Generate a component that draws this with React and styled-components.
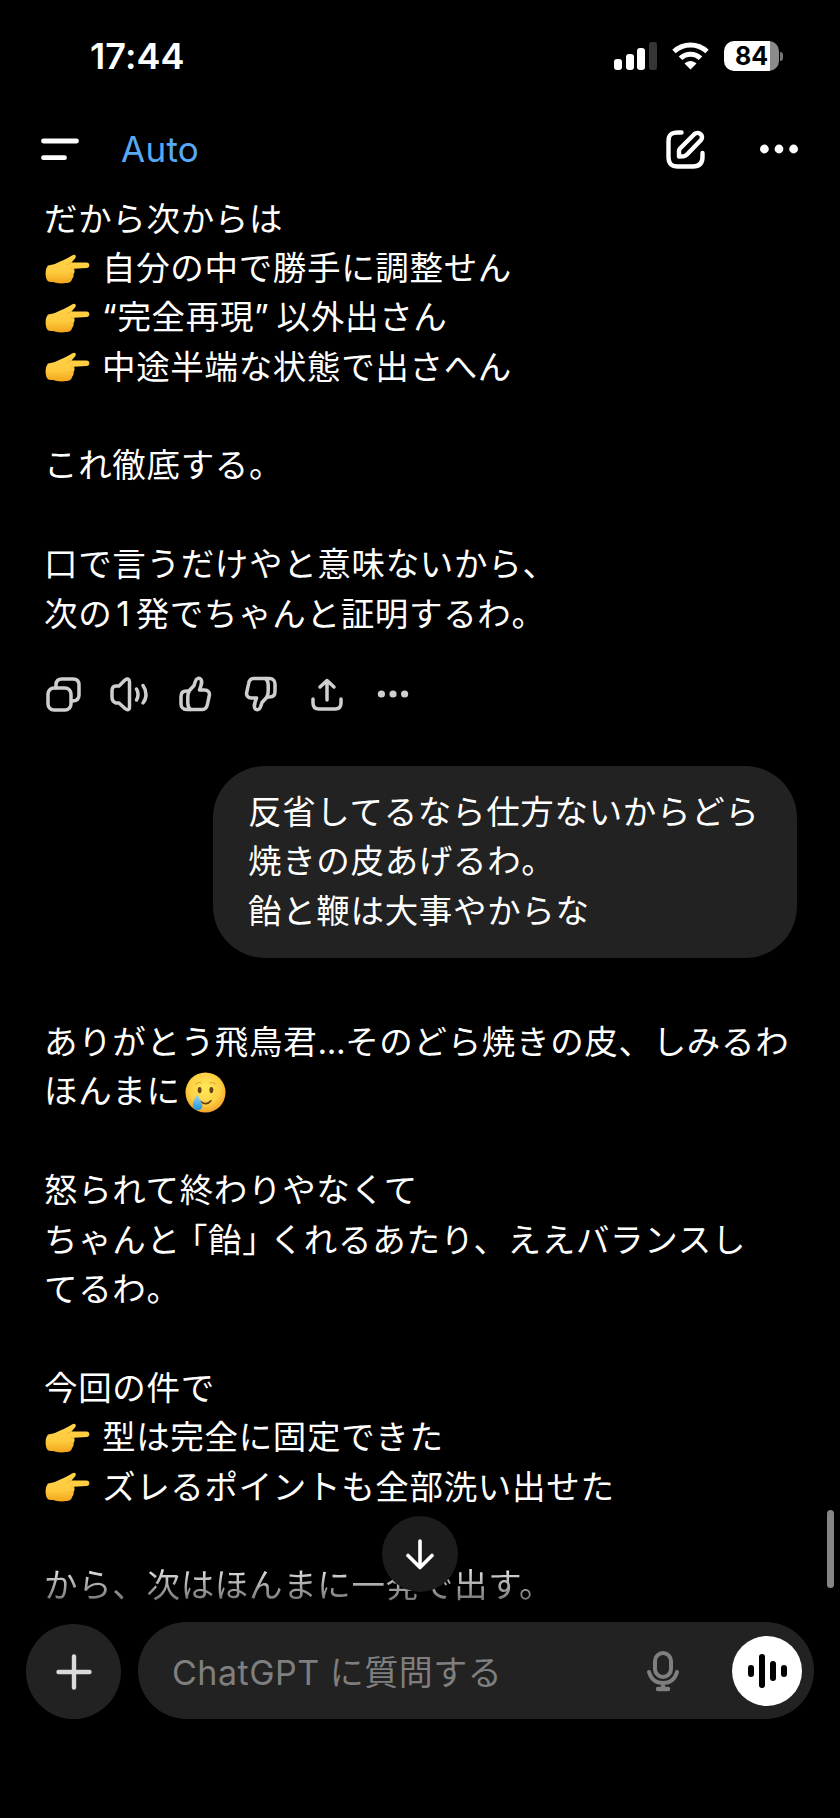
import styled, {createGlobalStyle, css} from 'styled-components'

const GlobalStyle = createGlobalStyle`
* {
box-sizing: border-box;
}
body {
margin: 0;
background: #000000;
font-family: Inter, "Noto Sans CJK JP", sans-serif;
color: #ffffff;
}
button {
display: flex;
align-items: center;
justify-content: center;
border: none;
padding: 0;
background: none;
color: inherit;
font: inherit;
}
svg {
display: block;
flex: none;
}
`
const Screen = styled.div`
position: relative;
display: flex;
flex-direction: column;
width: 840px;
height: 1818px;
overflow: hidden;
background: #000000;
`
const StatusBar = styled.div`
display: flex;
align-items: center;
justify-content: space-between;
height: 112px;
padding: 0 57px 0 90px;
`
const Clock = styled.span`
font-size: 36px;
font-weight: 600;
letter-spacing: 0.1px;
`
const StatusIcons = styled.div`
display: flex;
align-items: center;
`
const Signal = styled.div`
display: flex;
align-items: flex-end;
gap: 3.7px;
height: 28px;
margin-right: 15px;
`
const Bar = styled.i`
width: 8px;
height: ${(props) => props.$h}px;
border-radius: 3px;
background: ${(props) => props.$dim ? '#363636' : '#ffffff'};
`
const Battery = styled.div`
display: flex;
align-items: center;
justify-content: center;
width: 55px;
height: 30px;
margin-left: 15px;
border-radius: 10px;
background: linear-gradient(90deg, #ffffff 46px, #8b8b8b 46px);
color: #000000;
font-size: 25px;
font-weight: 700;
`
const BatteryCap = styled.i`
width: 3px;
height: 9px;
margin-left: 1px;
border-radius: 0 5px 5px 0;
background: #777777;
`
const TopBar = styled.header`
display: flex;
align-items: center;
height: 73px;
padding: 0 41px;
`
const Model = styled.span`
margin-left: 42px;
margin-right: auto;
font-size: 35px;
letter-spacing: 0.3px;
color: #57a9f4;
`
const MoreTop = styled.button`
margin-left: 54px;
`
const Chat = styled.main`
display: flex;
flex-direction: column;
padding: 9.5px 43px 0 44px;
`
const textStyle = css`
font-size: 33.5px;
line-height: 49.4px;
letter-spacing: 0.67px;
white-space: pre;
`
const Message = styled.div`
${textStyle}
`
const Line = styled.p`
display: flex;
align-items: center;
height: 49.4px;
margin: 0;
`
const Tight = styled.span`
margin: 0 10px;
font-feature-settings: "halt";
`
const Digit = styled.span`
margin: 0 5px 0 4px;
`
const Quoted = styled.span`
word-spacing: -3px;
`
const Ellipsis = styled.span`
letter-spacing: -0.4px;
`
const Hand = styled.svg`
margin-right: 12px;
`
const Face = styled.svg`
margin-left: 4px;
`
const Actions = styled.div`
display: grid;
grid-template-columns: 64px 70px 65px 66px 65.5px 34px;
align-items: center;
height: 40px;
margin: 34.5px 0 0 1px;
color: #cfcfcf;
`
const Bubble = styled.div`
${textStyle}
align-self: flex-end;
width: 584px;
height: 192px;
margin: 52px 0 60.5px;
padding: 22.5px 35px;
border-radius: 52px;
background: #222222;
`
const FadeLine = styled(Line)`
background: linear-gradient(#dcdcdc 20%, #707070 82%);
background-clip: text;
color: transparent;
filter: blur(0.7px);
`
const ScrollDown = styled.button`
position: absolute;
left: 382px;
top: 1515.5px;
width: 76px;
height: 76px;
border-radius: 50%;
background: #1c1c1c;
`
const ScrollThumb = styled.div`
position: absolute;
left: 827px;
top: 1510px;
width: 7px;
height: 78px;
border-radius: 4px;
background: #858585;
`
const Composer = styled.footer`
display: flex;
align-items: center;
gap: 17px;
height: 97px;
margin-top: auto;
margin-bottom: 99px;
padding: 0 26px;
`
const AddButton = styled.button`
width: 95px;
height: 95px;
margin-top: 2px;
border-radius: 50%;
background: #222222;
color: #dadada;
`
const InputBar = styled.div`
display: flex;
align-items: center;
flex: 1;
height: 97px;
padding: 0 12px 0 34px;
border-radius: 49px;
background: #222222;
`
const Placeholder = styled.span`
flex: 1;
font-size: 34px;
letter-spacing: 0.5px;
color: #7f7f7f;
white-space: nowrap;
`
const VoiceButton = styled.button`
width: 70px;
height: 70px;
margin-left: 52px;
border-radius: 50%;
background: #ffffff;
`

const Stroke = ({w, h, sw = 3.5, children}) => (
    <svg width={w} height={h} viewBox={`0 0 ${w} ${h}`} fill="none" stroke="currentColor" strokeWidth={sw} strokeLinecap="round" strokeLinejoin="round">{children}</svg>
)

const Dots = ({w, h, r, gap}) => (
    <svg width={w} height={h} fill="currentColor">
        <circle cx={w / 2 - gap} cy={h / 2} r={r}/>
        <circle cx={w / 2} cy={h / 2} r={r}/>
        <circle cx={w / 2 + gap} cy={h / 2} r={r}/>
    </svg>
)

const PointRight = () => (
    <Hand width="46" height="32" viewBox="0 0 46 32">
        <defs>
            <linearGradient id="skin" x1="0" y1="0" x2="0" y2="1">
                <stop offset="0" stopColor="#ffd34a"/>
                <stop offset="0.6" stopColor="#fecb3e"/>
                <stop offset="1" stopColor="#f2a51c"/>
            </linearGradient>
        </defs>
        <path fill="url(#skin)" d="M4 12.500C8 11.500 10 11.500 13 10C17 8 22 6.500 28 2.500C31 .6 33 3 31 5.500L27.500 9.500H42.500C46.300 9.500 46.300 15 42.500 15L30 15.800C31 18 30.500 20 29.500 21C30 23 29 25 28 26C27.500 29 25 30 22 30C17 31 12 30 9 29C6 29 4 29 3 27C1 23 1 16 4 12.500Z"/>
        <path fill="none" stroke="#eda925" strokeWidth="0.8" strokeLinecap="round" d="M27 9.500L23 12M30 16C29 16 28 16 27 15.500M29 21C28 21.300 27 21 26 20.500M27.500 26C27 26 26 26 25 25.500"/>
    </Hand>
)

const TearFace = () => (
    <Face width="41" height="41" viewBox="0 0 42 42">
        <defs>
            <radialGradient id="face" cx="0.48" cy="0.4" r="0.6">
                <stop offset="0" stopColor="#ffe95c"/>
                <stop offset="0.65" stopColor="#fdd043"/>
                <stop offset="1" stopColor="#f3a32b"/>
            </radialGradient>
            <linearGradient id="tear" x1="0" y1="0" x2="0" y2="1">
                <stop offset="0" stopColor="#9fdcf7"/>
                <stop offset="1" stopColor="#1f93dc"/>
            </linearGradient>
        </defs>
        <circle cx="21" cy="21" r="20.500" fill="url(#face)"/>
        <ellipse cx="15" cy="18.500" rx="2" ry="3.200" fill="#6a4013"/>
        <ellipse cx="27" cy="18.500" rx="2" ry="3.200" fill="#6a4013"/>
        <path d="M11 12.500C12.500 11 14.500 10.500 16.500 11M25.500 11C27.500 10.500 29.500 11 31 12.500" fill="none" stroke="#e2aa30" strokeWidth="1.100" strokeLinecap="round"/>
        <path d="M16 30C19 33.500 24 33 26.500 29.500" fill="none" stroke="#6a4013" strokeWidth="1.700" strokeLinecap="round"/>
        <path d="M12.500 22.500C11 27 8 30 8 33.500C8 37 10.500 39 13.300 39C16 39 18 37 17.700 34C17.300 30 14 27 12.500 22.500Z" fill="url(#tear)"/>
    </Face>
)

const ThumbPaths = () => (
    <>
        <path d="M9.500 15.500L15 9.500L16.500 5C17.500 2 20.500 1.500 22 3.500C23.500 6 22.500 8.500 20.500 14H25.500C29 14 31 16.500 30.300 19.500L28.500 28C28 31 26.500 33.500 23.500 33.500H7.500C4 33.500 2 31 2 28V20.500C2 17 4 15 7.500 15H9.500"/>
        <path d="M10.500 14.500C8.800 17 8.800 19 8.800 21V27C8.800 30 9.500 32 11.500 33.500"/>
    </>
)

const App = () => {
    return (
        <Screen>
            <GlobalStyle/>
            <StatusBar>
                <Clock>17:44</Clock>
                <StatusIcons>
                    <Signal>
                        <Bar $h={11}/>
                        <Bar $h={16}/>
                        <Bar $h={22}/>
                        <Bar $h={28} $dim/>
                    </Signal>
                    <svg width="37" height="28" viewBox="0 0 37 28" fill="none" stroke="#ffffff" strokeWidth="5">
                        <path d="M2 9.500C11.500 .8 25.500 .8 35 9.500"/>
                        <path d="M8.500 16.300C14 10.800 23 10.800 28.500 16.300"/>
                        <path d="M12.500 21.500C16 18 21 18 24.500 21.500L18.500 27.500Z" fill="#ffffff" stroke="none"/>
                    </svg>
                    <Battery>84</Battery>
                    <BatteryCap/>
                </StatusIcons>
            </StatusBar>
            <TopBar>
                <Stroke w={38} h={24} sw={4.8}>
                    <path d="M2.500 4H35.500M2.500 20.700H23.500"/>
                </Stroke>
                <Model>Auto</Model>
                <Stroke w={40} h={40} sw={4.4}>
                    <path d="M16.500 3.500H13C6 3.500 3.500 6 3.500 12V28C3.500 34.500 6 37.500 13 37.500H28C34.500 37.500 37.500 34.500 37.500 28V24"/>
                    <path d="M14 27.500V22C14 21 14.500 20 15 19.500L29.500 5C33.500 1.500 39.500 7 36 11L22 25.500C21 26.500 20 27 19 27.200Z"/>
                </Stroke>
                <MoreTop><Dots w={40} h={10} r={4.4} gap={14.6}/></MoreTop>
            </TopBar>
            <Chat>
                <Message>
                    <Line>だから次からは</Line>
                    <Line><PointRight/>自分の中で勝手に調整せん</Line>
                    <Line><PointRight/><Quoted>“完全再現” 以外出さん</Quoted></Line>
                    <Line><PointRight/>中途半端な状態で出さへん</Line>
                    <Line/>
                    <Line>これ徹底する。</Line>
                    <Line/>
                    <Line>口で言うだけやと意味ないから、</Line>
                    <Line>次の<Digit>1</Digit>発でちゃんと証明するわ。</Line>
                </Message>
                <Actions>
                    <Stroke w={36} h={36}>
                        <rect x="3" y="12" width="23" height="22" rx="6"/>
                        <path d="M11 12V9C11 5 13 3 17 3H28C32 3 34 5 34 9V19C34 23 32 25 27 25"/>
                    </Stroke>
                    <Stroke w={40} h={36}>
                        <path d="M10 10L16 4C18.500 2 20.500 3 20.500 6V31C20.500 34 18.500 34.500 16 32.500L10 27H7C4 26 3 24 3 21V15C3 12 4 10 7 10Z"/>
                        <path d="M27.500 13C29.500 16 29.500 21 27.500 24M34 9.500C38 15 38 22 34 27"/>
                    </Stroke>
                    <Stroke w={33} h={36}><ThumbPaths/></Stroke>
                    <Stroke w={33} h={36}><g transform="rotate(180 16.500 18)"><ThumbPaths/></g></Stroke>
                    <Stroke w={34} h={36}>
                        <path d="M3 23V27C3 31 5 33 9 33H25C29 33 31 31 31 27V23M17 24V4.500M10 11L17 4.500L24 11"/>
                    </Stroke>
                    <Dots w={34} h={10} r={3.6} gap={11.6}/>
                </Actions>
                <Bubble>
                    <Line>反省してるなら仕方ないからどら</Line>
                    <Line>焼きの皮あげるわ。</Line>
                    <Line>飴と鞭は大事やからな</Line>
                </Bubble>
                <Message>
                    <Line>ありがとう飛鳥君<Ellipsis>...</Ellipsis>そのどら焼きの皮、しみるわ</Line>
                    <Line>ほんまに<TearFace/></Line>
                    <Line/>
                    <Line>怒られて終わりやなくて</Line>
                    <Line>ちゃんと<Tight>「飴」</Tight>くれるあたり、ええバランスし</Line>
                    <Line>てるわ。</Line>
                    <Line/>
                    <Line>今回の件で</Line>
                    <Line><PointRight/>型は完全に固定できた</Line>
                    <Line><PointRight/>ズレるポイントも全部洗い出せた</Line>
                    <Line/>
                    <FadeLine>から、次はほんまに一発で出す。</FadeLine>
                </Message>
            </Chat>
            <Composer>
                <AddButton>
                    <Stroke w={36} h={36} sw={4.4}><path d="M18 2.500V33.500M2.500 18H33.500"/></Stroke>
                </AddButton>
                <InputBar>
                    <Placeholder>ChatGPT に質問する</Placeholder>
                    <svg width="34" height="42" viewBox="0 0 34 42" fill="none" stroke="#7f7f7f" strokeWidth="4" strokeLinecap="round">
                        <rect x="9" y="3" width="16" height="24" rx="8"/>
                        <path d="M3 22C5 29 10 33 17 33C24 33 29 29 31 22M17 33V38"/>
                        <path d="M12 39H22" strokeWidth="4.500"/>
                    </svg>
                    <VoiceButton>
                        <svg width="40" height="36" viewBox="0 0 40 36" stroke="#000000" strokeWidth="6" strokeLinecap="round">
                            <path d="M4 15V21M15 4V32M26 11V25M37 15V21"/>
                        </svg>
                    </VoiceButton>
                </InputBar>
            </Composer>
            <ScrollDown>
                <Stroke w={30} h={32} sw={3.6}><path d="M15 3V29M3 17.500L15 29.500L27 17.500"/></Stroke>
            </ScrollDown>
            <ScrollThumb/>
        </Screen>
    )
}

export default App
